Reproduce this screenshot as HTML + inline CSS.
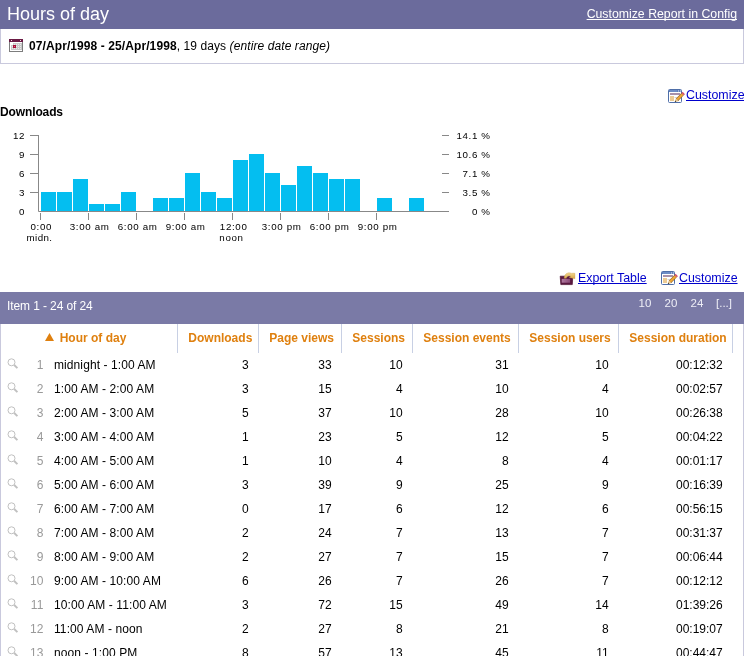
<!DOCTYPE html>
<html><head><meta charset="utf-8">
<style>
html,body{margin:0;padding:0;background:#fff;width:744px;height:656px;overflow:hidden;position:relative;font-family:"Liberation Sans",sans-serif;}
#title{position:absolute;left:0;top:0;width:744px;height:29px;background:#6b6b9c;}
#title .t{position:absolute;left:7px;top:4px;font-size:18px;line-height:21px;color:#fff;}
#title .c{position:absolute;right:7px;top:7px;font-size:12.3px;line-height:14px;color:#fff;text-decoration:underline;text-decoration-skip-ink:none;}
#datebox{position:absolute;left:0;top:29px;width:742px;height:34px;border:1px solid #c9c9dd;border-top:none;background:#fff;}
#datebox .d{position:absolute;left:28px;top:10px;font-size:12px;line-height:14px;color:#000;letter-spacing:0.09px;}
#datebox svg{position:absolute;left:8px;top:10px;}
.lnk{position:absolute;font-size:12.4px;line-height:14px;white-space:nowrap;color:#0000cc;text-decoration:underline;text-decoration-skip-ink:none;}
.ico{position:absolute;}
#dl{position:absolute;left:0;top:105px;font-size:12px;font-weight:bold;line-height:14px;letter-spacing:-0.12px;}
svg.chart{position:absolute;left:0;top:0;}
.yl{position:absolute;font-size:9.75px;line-height:10px;color:#000;letter-spacing:0.6px;text-align:right;white-space:nowrap;}
.yr{position:absolute;font-size:9.75px;line-height:10px;color:#000;letter-spacing:0.6px;text-align:right;white-space:nowrap;}
.xl{position:absolute;font-size:9.75px;line-height:10px;color:#000;letter-spacing:0.65px;white-space:nowrap;transform:translateX(-50%);}
#bar{position:absolute;left:0;top:292px;width:744px;height:32px;background:#7a7aa6;}
#bar .it{position:absolute;left:7px;top:7px;font-size:12px;line-height:14px;color:#fff;letter-spacing:-0.1px;}
#bar .pg{position:absolute;top:3.5px;font-size:11.5px;line-height:14px;color:#eeeef6;}
#tbl{position:absolute;left:0;top:324px;width:742px;height:340px;border-left:1px solid #c9c9dd;border-right:1px solid #c9c9dd;}
.sep{position:absolute;top:324px;height:29px;width:1px;background:#c8d0e4;}
.th{position:absolute;top:331px;font-size:12px;line-height:14px;font-weight:bold;color:#df800f;white-space:nowrap;}
.row{position:absolute;left:0;width:744px;height:24px;}
.row span{position:absolute;top:5px;font-size:12px;line-height:14px;white-space:nowrap;color:#000;}
.row .num{color:#999;}
.row .lbl{left:54px;letter-spacing:0.09px;}
.mg{position:absolute;left:7px;top:5px;}
#wrap{position:absolute;left:0;top:0;width:744px;height:656px;overflow:hidden;will-change:transform;}
</style></head><body><div id="wrap">
<div id="title"><span class="t">Hours of day</span><span class="c">Customize Report in Config</span></div>
<div id="datebox">
<svg width="14" height="13" viewBox="0 0 14 13" shape-rendering="crispEdges">
<rect x="0.5" y="0.5" width="13" height="12" fill="#fff" stroke="#7d7d7d"/>
<rect x="0" y="0" width="14" height="3" fill="#6a1a44"/>
<rect x="2" y="1" width="1" height="1" fill="#f0e0e8"/><rect x="11" y="1" width="1" height="1" fill="#f0e0e8"/>
<rect x="4" y="4" width="9" height="2" fill="#c8c8c8"/>
<rect x="2" y="6" width="11" height="5" fill="#c8c8c8"/>
<g fill="#ececec">
<rect x="5" y="5" width="1" height="1"/><rect x="7" y="5" width="1" height="1"/><rect x="9" y="5" width="1" height="1"/><rect x="11" y="5" width="1" height="1"/>
<rect x="3" y="7" width="1" height="1"/><rect x="7" y="7" width="1" height="1"/><rect x="9" y="7" width="1" height="1"/><rect x="11" y="7" width="1" height="1"/>
<rect x="3" y="9" width="1" height="1"/><rect x="5" y="9" width="1" height="1"/><rect x="7" y="9" width="1" height="1"/><rect x="9" y="9" width="1" height="1"/><rect x="11" y="9" width="1" height="1"/>
</g>
<rect x="4" y="6" width="3" height="3" fill="#a8103a"/>
<rect x="5" y="7" width="1" height="1" fill="#d86080"/>
</svg>
<span class="d"><b>07/Apr/1998 - 25/Apr/1998</b>, 19 days <i>(entire date range)</i></span>
</div>
<div class="ico" style="left:668px;top:89px"><svg width="17" height="15" viewBox="0 0 17 15">
<rect x="0.5" y="0.5" width="13" height="13" rx="1" fill="#fff" stroke="#4f6fa8"/>
<rect x="1" y="1" width="12" height="2" fill="#5f80bd"/>
<rect x="2" y="1.5" width="7" height="1" fill="#7d9ad0"/>
<rect x="10" y="1.5" width="1" height="1" fill="#e8eef8"/><rect x="12" y="1.5" width="1" height="1" fill="#e8eef8"/>
<rect x="2" y="4" width="10" height="2" fill="#a892aa"/>
<rect x="2" y="7" width="4" height="5" fill="#eccb94"/>
<rect x="6.5" y="8" width="3" height="0.8" fill="#c8c8c8"/><rect x="8" y="11" width="3" height="0.8" fill="#c8c8c8"/>
<path d="M9 10.8 L14.6 5.2" stroke="#9a6424" stroke-width="3.3" stroke-linecap="butt"/>
<path d="M9 10.8 L14.6 5.2" stroke="#eea838" stroke-width="2.1"/>
<path d="M14.6 5.2 L15.8 4" stroke="#d4506a" stroke-width="3.3"/>
<path d="M6.8 13 L7.6 9.6 L10.2 12.2 Z" fill="#e8c890"/>
<path d="M6.8 13 L7.2 11.4 L8.4 12.6 Z" fill="#222"/>
</svg></div>
<span class="lnk" style="left:686px;top:88px">Customize</span>
<div id="dl">Downloads</div>
<svg class="chart" width="744" height="260">
<g stroke="#888" stroke-width="1" fill="none">
<path d="M38.5 135 V211.5 H449"/>
<path d="M30 135.5 H38 M30 154.5 H38 M30 173.5 H38 M30 192.5 H38"/>
<path d="M442 135.5 H449 M442 154.5 H449 M442 173.5 H449 M442 192.5 H449"/>
<path d="M40.5 213 V220 M88.5 213 V220 M136.5 213 V220 M184.5 213 V220 M232.5 213 V220 M280.5 213 V220 M328.5 213 V220 M376.5 213 V220"/>
</g>
<g fill="#04bef0" shape-rendering="crispEdges">
<rect x="41" y="192" width="15" height="19"/><rect x="57" y="192" width="15" height="19"/><rect x="73" y="179" width="15" height="32"/><rect x="89" y="204" width="15" height="7"/><rect x="105" y="204" width="15" height="7"/><rect x="121" y="192" width="15" height="19"/><rect x="153" y="198" width="15" height="13"/><rect x="169" y="198" width="15" height="13"/><rect x="185" y="173" width="15" height="38"/><rect x="201" y="192" width="15" height="19"/><rect x="217" y="198" width="15" height="13"/><rect x="233" y="160" width="15" height="51"/><rect x="249" y="154" width="15" height="57"/><rect x="265" y="173" width="15" height="38"/><rect x="281" y="185" width="15" height="26"/><rect x="297" y="166" width="15" height="45"/><rect x="313" y="173" width="15" height="38"/><rect x="329" y="179" width="15" height="32"/><rect x="345" y="179" width="15" height="32"/><rect x="377" y="198" width="15" height="13"/><rect x="409" y="198" width="15" height="13"/>
</g>
</svg>
<span class="yl" style="right:718.9px;top:130.5px">12</span>
<span class="yl" style="right:718.9px;top:149.5px">9</span>
<span class="yl" style="right:718.9px;top:168.5px">6</span>
<span class="yl" style="right:718.9px;top:187.5px">3</span>
<span class="yl" style="right:718.9px;top:206.5px">0</span>
<span class="yr" style="right:253.5px;top:130.5px">14.1 %</span>
<span class="yr" style="right:253.5px;top:149.5px">10.6 %</span>
<span class="yr" style="right:253.5px;top:168.5px">7.1 %</span>
<span class="yr" style="right:253.5px;top:187.5px">3.5 %</span>
<span class="yr" style="right:253.5px;top:206.5px">0 %</span>
<span class="xl" style="left:41.3px;top:222px">0:00</span>
<span class="xl" style="left:39.5px;top:233px;letter-spacing:0.4px">midn.</span>
<span class="xl" style="left:89.7px;top:222px">3:00 am</span>
<span class="xl" style="left:137.7px;top:222px">6:00 am</span>
<span class="xl" style="left:185.7px;top:222px">9:00 am</span>
<span class="xl" style="left:233.7px;top:222px">12:00</span>
<span class="xl" style="left:231.5px;top:233px">noon</span>
<span class="xl" style="left:281.7px;top:222px">3:00 pm</span>
<span class="xl" style="left:329.7px;top:222px">6:00 pm</span>
<span class="xl" style="left:377.7px;top:222px">9:00 pm</span>

<div class="ico" style="left:559px;top:271px"><svg width="17" height="15" viewBox="0 0 17 15">
<defs><linearGradient id="eg" x1="0" y1="0" x2="1" y2="0"><stop offset="0" stop-color="#b07aa0"/><stop offset="1" stop-color="#8a4a78"/></linearGradient>
<linearGradient id="ag" x1="0" y1="0" x2="0" y2="1"><stop offset="0" stop-color="#f0d690"/><stop offset="1" stop-color="#d8a848"/></linearGradient></defs>
<path d="M1.2 5.2 H13.8 L13.3 13.6 H1.8 Z" fill="#5a1840" stroke="#4a1030" stroke-width="0.7" stroke-linejoin="round"/>
<rect x="2.7" y="7.9" width="8.4" height="3.8" fill="url(#eg)"/>
<path d="M5.2 7.3 C5.2 3.2 8.5 0.8 12.2 2.2 L14.3 2.1 L16 2.3 L16 7.7 L10.2 6.5 L11.8 5 C9.8 4.2 7.8 5.2 7.3 7.3 Z" fill="url(#ag)" stroke="#c89a48" stroke-width="0.3"/>
</svg></div>
<span class="lnk" style="left:578px;top:271px">Export Table</span>
<div class="ico" style="left:661px;top:271px"><svg width="17" height="15" viewBox="0 0 17 15">
<rect x="0.5" y="0.5" width="13" height="13" rx="1" fill="#fff" stroke="#4f6fa8"/>
<rect x="1" y="1" width="12" height="2" fill="#5f80bd"/>
<rect x="2" y="1.5" width="7" height="1" fill="#7d9ad0"/>
<rect x="10" y="1.5" width="1" height="1" fill="#e8eef8"/><rect x="12" y="1.5" width="1" height="1" fill="#e8eef8"/>
<rect x="2" y="4" width="10" height="2" fill="#a892aa"/>
<rect x="2" y="7" width="4" height="5" fill="#eccb94"/>
<rect x="6.5" y="8" width="3" height="0.8" fill="#c8c8c8"/><rect x="8" y="11" width="3" height="0.8" fill="#c8c8c8"/>
<path d="M9 10.8 L14.6 5.2" stroke="#9a6424" stroke-width="3.3" stroke-linecap="butt"/>
<path d="M9 10.8 L14.6 5.2" stroke="#eea838" stroke-width="2.1"/>
<path d="M14.6 5.2 L15.8 4" stroke="#d4506a" stroke-width="3.3"/>
<path d="M6.8 13 L7.6 9.6 L10.2 12.2 Z" fill="#e8c890"/>
<path d="M6.8 13 L7.2 11.4 L8.4 12.6 Z" fill="#222"/>
</svg></div>
<span class="lnk" style="left:679px;top:271px">Customize</span>

<div id="bar"><span class="it">Item 1 - 24 of 24</span>
<span class="pg" style="left:638.5px">10</span><span class="pg" style="left:664.5px">20</span><span class="pg" style="left:690.5px">24</span><span class="pg" style="left:716px">[...]</span></div>
<div id="tbl"></div>
<div class="sep" style="left:177px"></div><div class="sep" style="left:258px"></div><div class="sep" style="left:341px"></div><div class="sep" style="left:412px"></div><div class="sep" style="left:518px"></div><div class="sep" style="left:618px"></div><div class="sep" style="left:732px"></div>
<svg style="position:absolute;left:45px;top:333px" width="9" height="8" viewBox="0 0 9 8"><path d="M4.5 0 L9 8 H0 Z" fill="#df800f"/></svg>
<span class="th" style="left:59.7px">Hour of day</span>
<span class="th" style="left:188.3px">Downloads</span><span class="th" style="left:269.3px">Page views</span><span class="th" style="left:352.3px">Sessions</span><span class="th" style="left:423.3px">Session events</span><span class="th" style="left:529.3px">Session users</span><span class="th" style="left:629.3px">Session duration</span>
<div class="row" style="top:353px"><svg class="mg" width="12" height="12" viewBox="0 0 12 12"><circle cx="4.5" cy="4.3" r="3.5" fill="none" stroke="#c0c0c0" stroke-width="1"/><path d="M7.2 7.0 L10.4 10.2" stroke="#c0c0c0" stroke-width="1.9"/></svg><span class="num" style="right:700.7px">1</span><span class="lbl">midnight - 1:00 AM</span><span class="v" style="right:495.3px">3</span><span class="v" style="right:412.3px">33</span><span class="v" style="right:341.3px">10</span><span class="v" style="right:235.3px">31</span><span class="v" style="right:135.29999999999995px">10</span><span class="v" style="right:21.299999999999955px">00:12:32</span></div><div class="row" style="top:377px"><svg class="mg" width="12" height="12" viewBox="0 0 12 12"><circle cx="4.5" cy="4.3" r="3.5" fill="none" stroke="#c0c0c0" stroke-width="1"/><path d="M7.2 7.0 L10.4 10.2" stroke="#c0c0c0" stroke-width="1.9"/></svg><span class="num" style="right:700.7px">2</span><span class="lbl">1:00 AM - 2:00 AM</span><span class="v" style="right:495.3px">3</span><span class="v" style="right:412.3px">15</span><span class="v" style="right:341.3px">4</span><span class="v" style="right:235.3px">10</span><span class="v" style="right:135.29999999999995px">4</span><span class="v" style="right:21.299999999999955px">00:02:57</span></div><div class="row" style="top:401px"><svg class="mg" width="12" height="12" viewBox="0 0 12 12"><circle cx="4.5" cy="4.3" r="3.5" fill="none" stroke="#c0c0c0" stroke-width="1"/><path d="M7.2 7.0 L10.4 10.2" stroke="#c0c0c0" stroke-width="1.9"/></svg><span class="num" style="right:700.7px">3</span><span class="lbl">2:00 AM - 3:00 AM</span><span class="v" style="right:495.3px">5</span><span class="v" style="right:412.3px">37</span><span class="v" style="right:341.3px">10</span><span class="v" style="right:235.3px">28</span><span class="v" style="right:135.29999999999995px">10</span><span class="v" style="right:21.299999999999955px">00:26:38</span></div><div class="row" style="top:425px"><svg class="mg" width="12" height="12" viewBox="0 0 12 12"><circle cx="4.5" cy="4.3" r="3.5" fill="none" stroke="#c0c0c0" stroke-width="1"/><path d="M7.2 7.0 L10.4 10.2" stroke="#c0c0c0" stroke-width="1.9"/></svg><span class="num" style="right:700.7px">4</span><span class="lbl">3:00 AM - 4:00 AM</span><span class="v" style="right:495.3px">1</span><span class="v" style="right:412.3px">23</span><span class="v" style="right:341.3px">5</span><span class="v" style="right:235.3px">12</span><span class="v" style="right:135.29999999999995px">5</span><span class="v" style="right:21.299999999999955px">00:04:22</span></div><div class="row" style="top:449px"><svg class="mg" width="12" height="12" viewBox="0 0 12 12"><circle cx="4.5" cy="4.3" r="3.5" fill="none" stroke="#c0c0c0" stroke-width="1"/><path d="M7.2 7.0 L10.4 10.2" stroke="#c0c0c0" stroke-width="1.9"/></svg><span class="num" style="right:700.7px">5</span><span class="lbl">4:00 AM - 5:00 AM</span><span class="v" style="right:495.3px">1</span><span class="v" style="right:412.3px">10</span><span class="v" style="right:341.3px">4</span><span class="v" style="right:235.3px">8</span><span class="v" style="right:135.29999999999995px">4</span><span class="v" style="right:21.299999999999955px">00:01:17</span></div><div class="row" style="top:473px"><svg class="mg" width="12" height="12" viewBox="0 0 12 12"><circle cx="4.5" cy="4.3" r="3.5" fill="none" stroke="#c0c0c0" stroke-width="1"/><path d="M7.2 7.0 L10.4 10.2" stroke="#c0c0c0" stroke-width="1.9"/></svg><span class="num" style="right:700.7px">6</span><span class="lbl">5:00 AM - 6:00 AM</span><span class="v" style="right:495.3px">3</span><span class="v" style="right:412.3px">39</span><span class="v" style="right:341.3px">9</span><span class="v" style="right:235.3px">25</span><span class="v" style="right:135.29999999999995px">9</span><span class="v" style="right:21.299999999999955px">00:16:39</span></div><div class="row" style="top:497px"><svg class="mg" width="12" height="12" viewBox="0 0 12 12"><circle cx="4.5" cy="4.3" r="3.5" fill="none" stroke="#c0c0c0" stroke-width="1"/><path d="M7.2 7.0 L10.4 10.2" stroke="#c0c0c0" stroke-width="1.9"/></svg><span class="num" style="right:700.7px">7</span><span class="lbl">6:00 AM - 7:00 AM</span><span class="v" style="right:495.3px">0</span><span class="v" style="right:412.3px">17</span><span class="v" style="right:341.3px">6</span><span class="v" style="right:235.3px">12</span><span class="v" style="right:135.29999999999995px">6</span><span class="v" style="right:21.299999999999955px">00:56:15</span></div><div class="row" style="top:521px"><svg class="mg" width="12" height="12" viewBox="0 0 12 12"><circle cx="4.5" cy="4.3" r="3.5" fill="none" stroke="#c0c0c0" stroke-width="1"/><path d="M7.2 7.0 L10.4 10.2" stroke="#c0c0c0" stroke-width="1.9"/></svg><span class="num" style="right:700.7px">8</span><span class="lbl">7:00 AM - 8:00 AM</span><span class="v" style="right:495.3px">2</span><span class="v" style="right:412.3px">24</span><span class="v" style="right:341.3px">7</span><span class="v" style="right:235.3px">13</span><span class="v" style="right:135.29999999999995px">7</span><span class="v" style="right:21.299999999999955px">00:31:37</span></div><div class="row" style="top:545px"><svg class="mg" width="12" height="12" viewBox="0 0 12 12"><circle cx="4.5" cy="4.3" r="3.5" fill="none" stroke="#c0c0c0" stroke-width="1"/><path d="M7.2 7.0 L10.4 10.2" stroke="#c0c0c0" stroke-width="1.9"/></svg><span class="num" style="right:700.7px">9</span><span class="lbl">8:00 AM - 9:00 AM</span><span class="v" style="right:495.3px">2</span><span class="v" style="right:412.3px">27</span><span class="v" style="right:341.3px">7</span><span class="v" style="right:235.3px">15</span><span class="v" style="right:135.29999999999995px">7</span><span class="v" style="right:21.299999999999955px">00:06:44</span></div><div class="row" style="top:569px"><svg class="mg" width="12" height="12" viewBox="0 0 12 12"><circle cx="4.5" cy="4.3" r="3.5" fill="none" stroke="#c0c0c0" stroke-width="1"/><path d="M7.2 7.0 L10.4 10.2" stroke="#c0c0c0" stroke-width="1.9"/></svg><span class="num" style="right:700.7px">10</span><span class="lbl">9:00 AM - 10:00 AM</span><span class="v" style="right:495.3px">6</span><span class="v" style="right:412.3px">26</span><span class="v" style="right:341.3px">7</span><span class="v" style="right:235.3px">26</span><span class="v" style="right:135.29999999999995px">7</span><span class="v" style="right:21.299999999999955px">00:12:12</span></div><div class="row" style="top:593px"><svg class="mg" width="12" height="12" viewBox="0 0 12 12"><circle cx="4.5" cy="4.3" r="3.5" fill="none" stroke="#c0c0c0" stroke-width="1"/><path d="M7.2 7.0 L10.4 10.2" stroke="#c0c0c0" stroke-width="1.9"/></svg><span class="num" style="right:700.7px">11</span><span class="lbl">10:00 AM - 11:00 AM</span><span class="v" style="right:495.3px">3</span><span class="v" style="right:412.3px">72</span><span class="v" style="right:341.3px">15</span><span class="v" style="right:235.3px">49</span><span class="v" style="right:135.29999999999995px">14</span><span class="v" style="right:21.299999999999955px">01:39:26</span></div><div class="row" style="top:617px"><svg class="mg" width="12" height="12" viewBox="0 0 12 12"><circle cx="4.5" cy="4.3" r="3.5" fill="none" stroke="#c0c0c0" stroke-width="1"/><path d="M7.2 7.0 L10.4 10.2" stroke="#c0c0c0" stroke-width="1.9"/></svg><span class="num" style="right:700.7px">12</span><span class="lbl">11:00 AM - noon</span><span class="v" style="right:495.3px">2</span><span class="v" style="right:412.3px">27</span><span class="v" style="right:341.3px">8</span><span class="v" style="right:235.3px">21</span><span class="v" style="right:135.29999999999995px">8</span><span class="v" style="right:21.299999999999955px">00:19:07</span></div><div class="row" style="top:641px"><svg class="mg" width="12" height="12" viewBox="0 0 12 12"><circle cx="4.5" cy="4.3" r="3.5" fill="none" stroke="#c0c0c0" stroke-width="1"/><path d="M7.2 7.0 L10.4 10.2" stroke="#c0c0c0" stroke-width="1.9"/></svg><span class="num" style="right:700.7px">13</span><span class="lbl">noon - 1:00 PM</span><span class="v" style="right:495.3px">8</span><span class="v" style="right:412.3px">57</span><span class="v" style="right:341.3px">13</span><span class="v" style="right:235.3px">45</span><span class="v" style="right:135.29999999999995px">11</span><span class="v" style="right:21.299999999999955px">00:44:47</span></div>
</div></body></html>
